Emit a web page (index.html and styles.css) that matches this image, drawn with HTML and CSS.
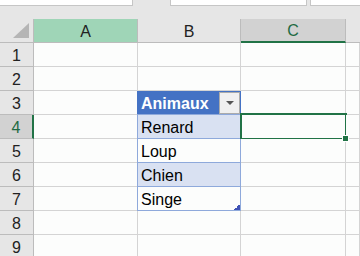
FILE: index.html
```html
<!DOCTYPE html>
<html lang="fr">
<head>
    <meta charset="UTF-8">
    <meta name="viewport" content="width=device-width, initial-scale=1">
    <title>Animaux</title>
    <link rel="stylesheet" href="styles.css">
</head>
<body>
    <div class="toolbar">
        <div class="box name-box"></div>
        <div class="box formula-box"></div>
        <div class="box extra-box"></div>
    </div>
    <div class="sheet">
        <div class="corner"><span class="tri"></span></div>
        <div class="col-head col-a">A</div>
        <div class="col-head">B</div>
        <div class="col-head col-active">C</div>
        <div class="col-head col-rest"></div>

        <div class="row-head">1</div><div class="cell"></div><div class="cell"></div><div class="cell"></div><div class="cell"></div>
        <div class="row-head">2</div><div class="cell"></div><div class="cell"></div><div class="cell"></div><div class="cell"></div>
        <div class="row-head">3</div><div class="cell"></div><div class="cell tbl-head">Animaux<span class="filter"><span class="arrow"></span></span></div><div class="cell"></div><div class="cell"></div>
        <div class="row-head row-active">4</div><div class="cell"></div><div class="cell tbl band">Renard</div><div class="cell selected"><span class="handle"></span></div><div class="cell"></div>
        <div class="row-head">5</div><div class="cell"></div><div class="cell tbl">Loup</div><div class="cell"></div><div class="cell"></div>
        <div class="row-head">6</div><div class="cell"></div><div class="cell tbl band">Chien</div><div class="cell"></div><div class="cell"></div>
        <div class="row-head">7</div><div class="cell"></div><div class="cell tbl tbl-last">Singe<span class="resize"></span></div><div class="cell"></div><div class="cell"></div>
        <div class="row-head">8</div><div class="cell"></div><div class="cell"></div><div class="cell"></div><div class="cell"></div>
        <div class="row-head">9</div><div class="cell"></div><div class="cell"></div><div class="cell"></div><div class="cell"></div>
    </div>
</body>
</html>
```

FILE: styles.css
```css
body {
    margin: 0;
    font-family: "Liberation Sans", Arial, sans-serif;
    font-size: 16px;
    color: #000;
    background-color: #e6e6e6;
    overflow: hidden;
}
.toolbar {
    display: flex;
    height: 19px;
    background-color: #e6e6e6;
}
.box {
    height: 6px;
    background-color: #fff;
    border: 1px solid #c6c6c6;
    border-top: none;
    box-sizing: border-box;
}
.name-box {
    width: 133px;
    border-left: none;
}
.formula-box {
    width: 137px;
    margin-left: 37px;
}
.extra-box {
    flex: 1;
    margin-left: 3px;
    border-right: none;
}
.sheet {
    display: grid;
    grid-template-columns: 34px 104px 103px 105px 1fr;
    grid-auto-rows: 24px;
    background-color: #fff;
}
.corner, .col-head, .row-head {
    background-color: #e6e6e6;
    box-sizing: border-box;
    display: flex;
    align-items: center;
    justify-content: center;
    color: #222;
}
.corner {
    border-right: 1px solid #bcbcbc;
    border-bottom: 1px solid #bcbcbc;
    position: relative;
}
.tri {
    position: absolute;
    right: 4px;
    bottom: 4px;
    width: 0;
    height: 0;
    border-left: 16px solid transparent;
    border-bottom: 15px solid #b5b5b5;
}
.col-head {
    border-right: 1px solid #bcbcbc;
    border-bottom: 1px solid #bcbcbc;
    padding-top: 2px;
}
.col-a {
    background-color: #9fd5b7;
}
.col-active {
    background-color: #d2d2d2;
    border-bottom: 2px solid #217346;
    color: #1e6b43;
}
.col-rest {
    border-right: none;
}
.row-head {
    border-right: 1px solid #bcbcbc;
    border-bottom: 1px solid #bcbcbc;
    padding-top: 2px;
}
.row-active {
    background-color: #d2d2d2;
    border-right: 2px solid #217346;
    color: #1e6b43;
}
.cell {
    background-color: #fcfdfc;
    border-right: 1px solid #d4d4d4;
    border-bottom: 1px solid #d4d4d4;
    box-sizing: border-box;
    display: flex;
    align-items: center;
    padding: 2px 0 0 3px;
    position: relative;
}
.tbl-head {
    background-color: #4472c4;
    color: #fff;
    font-weight: bold;
    border-right: 1px solid #4472c4;
    border-bottom: 1px solid #8ea9db;
    margin-left: -1px;
    padding-left: 4px;
}
.filter {
    position: absolute;
    right: 0;
    top: 1px;
    width: 19px;
    height: 20px;
    background-color: #f0f0f0;
    border: 1px solid #ababab;
    display: flex;
    align-items: center;
    justify-content: center;
}
.arrow {
    width: 0;
    height: 0;
    border-left: 4px solid transparent;
    border-right: 4px solid transparent;
    border-top: 4px solid #555;
}
.tbl {
    border-left: 1px solid #8ea9db;
    border-right: 1px solid #8ea9db;
    border-bottom: 1px solid #8ea9db;
    margin-left: -1px;
}
.band {
    background-color: #d9e1f2;
}
.resize {
    position: absolute;
    right: 0;
    bottom: 0;
    width: 6px;
    height: 6px;
    background: linear-gradient(135deg, transparent 50%, #3f52b5 50%);
}
.selected::after {
    content: "";
    position: absolute;
    left: -1px;
    top: -2px;
    right: -2px;
    bottom: -2px;
    border: 2px solid #217346;
}
.handle {
    position: absolute;
    right: -4px;
    bottom: -4px;
    width: 5px;
    height: 5px;
    background-color: #217346;
    border: 1px solid #fff;
    z-index: 1;
}
```
